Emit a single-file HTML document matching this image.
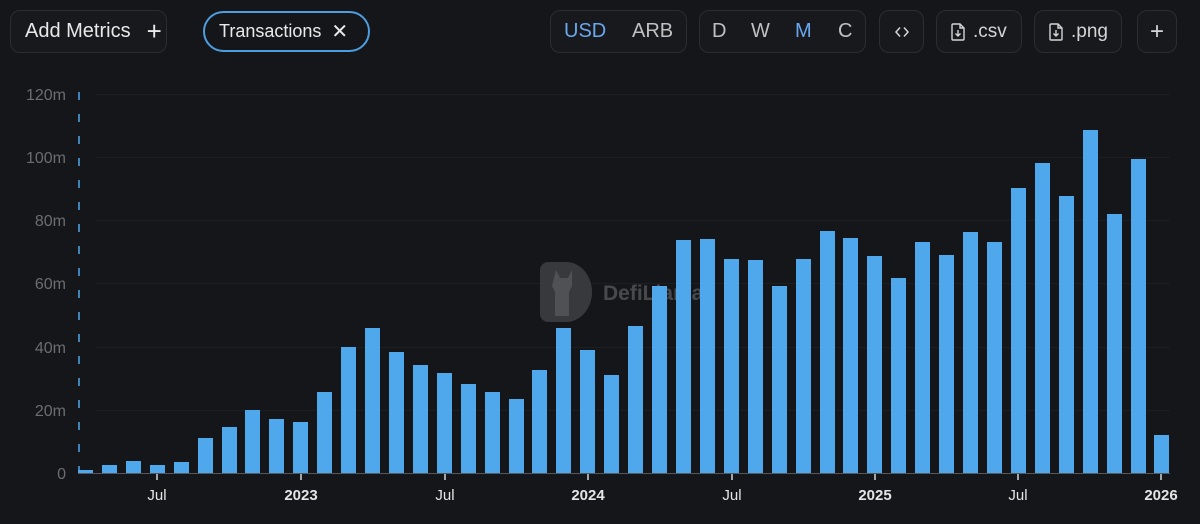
<!DOCTYPE html>
<html><head><meta charset="utf-8"><style>
html,body{margin:0;padding:0;background:#151619;width:1200px;height:524px;overflow:hidden;font-family:"Liberation Sans",sans-serif;}
.b{position:absolute;box-sizing:border-box;border:1px solid #2b2d31;border-radius:10px;background:#18191c;color:#d4d5d7;display:flex;align-items:center;}
</style></head><body>
<div class="b" style="left:10px;top:10px;width:157px;height:43px;padding-left:14px;font-size:20px;color:#e8e9ea;">Add Metrics<span style="margin-left:16px;font-size:26px;font-weight:300;">+</span></div>
<div class="b" style="left:203px;top:11px;width:167px;height:41px;border:2px solid #4d9ee0;border-radius:21px;background:#151619;padding-left:14px;font-size:18px;color:#e8e9ea;">Transactions<span style="margin-left:10px;font-size:20px;">✕</span></div>
<div class="b" style="left:550px;top:10px;width:137px;height:43px;font-size:20px;"><span style="position:absolute;left:13px;color:#6aa7ee;">USD</span><span style="position:absolute;left:81px;color:#bfc0c2;">ARB</span></div>
<div class="b" style="left:699px;top:10px;width:167px;height:43px;font-size:20px;color:#bfc0c2;"><span style="position:absolute;left:12px;">D</span><span style="position:absolute;left:51px;">W</span><span style="position:absolute;left:95px;color:#6aa7ee;">M</span><span style="position:absolute;left:138px;">C</span></div>
<div class="b" style="left:879px;top:10px;width:45px;height:43px;justify-content:center;"><svg width="14" height="12" viewBox="0 0 14 12"><path d="M5 1.5L1 6l4 4.5M9 1.5L13 6l-4 4.5" fill="none" stroke="#d4d5d7" stroke-width="1.5"/></svg></div>
<div class="b" style="left:936px;top:10px;width:86px;height:43px;padding-left:14px;font-size:19px;"><svg width="14" height="18" viewBox="0 0 14 18"><path d="M2 1h7l4 4v11a1 1 0 0 1-1 1H2a1 1 0 0 1-1-1V2a1 1 0 0 1 1-1zM9 1v4h4M7 7v6M4.5 10.5L7 13l2.5-2.5" fill="none" stroke="#d4d5d7" stroke-width="1.4"/></svg><span style="margin-left:8px;">.csv</span></div>
<div class="b" style="left:1034px;top:10px;width:88px;height:43px;padding-left:14px;font-size:19px;"><svg width="14" height="18" viewBox="0 0 14 18"><path d="M2 1h7l4 4v11a1 1 0 0 1-1 1H2a1 1 0 0 1-1-1V2a1 1 0 0 1 1-1zM9 1v4h4M7 7v6M4.5 10.5L7 13l2.5-2.5" fill="none" stroke="#d4d5d7" stroke-width="1.4"/></svg><span style="margin-left:8px;">.png</span></div>
<div class="b" style="left:1137px;top:10px;width:40px;height:43px;justify-content:center;font-size:24px;font-weight:300;">+</div>

<svg style="position:absolute;left:0;top:0" width="1200" height="524">
<g stroke="#1d1e22" stroke-width="1">
<line x1="95" y1="94.5" x2="1170" y2="94.5"/><line x1="95" y1="157.5" x2="1170" y2="157.5"/><line x1="95" y1="220.5" x2="1170" y2="220.5"/><line x1="95" y1="283.5" x2="1170" y2="283.5"/><line x1="95" y1="347.5" x2="1170" y2="347.5"/><line x1="95" y1="410.5" x2="1170" y2="410.5"/>
</g>
<g fill="#6b6d70" font-size="16" text-anchor="end" font-family="Liberation Sans,sans-serif">
<text x="66" y="100">120m</text><text x="66" y="163">100m</text><text x="66" y="226">80m</text><text x="66" y="289">60m</text><text x="66" y="353">40m</text><text x="66" y="416">20m</text><text x="66" y="479">0</text>
</g>
<g>
<path d="M548 262h18a26 30 0 0 1 0 60h-18a8 8 0 0 1-8-8v-44a8 8 0 0 1 8-8z" fill="#38393c"/>
<path d="M556 270l4 8h8l4-8v16l-3 6v24h-14v-24l-3-6z" fill="#505154"/>
<text x="603" y="300" fill="#48494c" font-size="21" font-weight="bold" font-family="Liberation Sans,sans-serif">DefiLlama</text>
</g>
<line x1="79" y1="92" x2="79" y2="473" stroke="#4fa8ec" stroke-width="1.5" stroke-dasharray="8,14"/>
<g fill="#4fa8ec">
<rect x="78" y="470" width="15" height="3"/><rect x="102" y="465" width="15" height="8"/><rect x="126" y="461" width="15" height="12"/><rect x="150" y="465" width="15" height="8"/><rect x="174" y="462" width="15" height="11"/><rect x="198" y="438" width="15" height="35"/><rect x="222" y="427" width="15" height="46"/><rect x="245" y="410" width="15" height="63"/><rect x="269" y="419" width="15" height="54"/><rect x="293" y="422" width="15" height="51"/><rect x="317" y="392" width="15" height="81"/><rect x="341" y="347" width="15" height="126"/><rect x="365" y="328" width="15" height="145"/><rect x="389" y="352" width="15" height="121"/><rect x="413" y="365" width="15" height="108"/><rect x="437" y="373" width="15" height="100"/><rect x="461" y="384" width="15" height="89"/><rect x="485" y="392" width="15" height="81"/><rect x="509" y="399" width="15" height="74"/><rect x="532" y="370" width="15" height="103"/><rect x="556" y="328" width="15" height="145"/><rect x="580" y="350" width="15" height="123"/><rect x="604" y="375" width="15" height="98"/><rect x="628" y="326" width="15" height="147"/><rect x="652" y="286" width="15" height="187"/><rect x="676" y="240" width="15" height="233"/><rect x="700" y="239" width="15" height="234"/><rect x="724" y="259" width="15" height="214"/><rect x="748" y="260" width="15" height="213"/><rect x="772" y="286" width="15" height="187"/><rect x="796" y="259" width="15" height="214"/><rect x="820" y="231" width="15" height="242"/><rect x="843" y="238" width="15" height="235"/><rect x="867" y="256" width="15" height="217"/><rect x="891" y="278" width="15" height="195"/><rect x="915" y="242" width="15" height="231"/><rect x="939" y="255" width="15" height="218"/><rect x="963" y="232" width="15" height="241"/><rect x="987" y="242" width="15" height="231"/><rect x="1011" y="188" width="15" height="285"/><rect x="1035" y="163" width="15" height="310"/><rect x="1059" y="196" width="15" height="277"/><rect x="1083" y="130" width="15" height="343"/><rect x="1107" y="214" width="15" height="259"/><rect x="1131" y="159" width="15" height="314"/><rect x="1154" y="435" width="15" height="38"/>
</g>
<line x1="78" y1="473.5" x2="1170" y2="473.5" stroke="#55575b" stroke-width="1"/>
<g stroke="#d4d5d7" stroke-width="1.5"><line x1="157" y1="474" x2="157" y2="480"/><line x1="301" y1="474" x2="301" y2="480"/><line x1="445" y1="474" x2="445" y2="480"/><line x1="588" y1="474" x2="588" y2="480"/><line x1="732" y1="474" x2="732" y2="480"/><line x1="875" y1="474" x2="875" y2="480"/><line x1="1018" y1="474" x2="1018" y2="480"/><line x1="1161" y1="474" x2="1161" y2="480"/></g>
<g fill="#e4e5e6" font-size="15" text-anchor="middle" font-family="Liberation Sans,sans-serif">
<text x="157" y="500">Jul</text><text x="301" y="500" font-weight="bold">2023</text><text x="445" y="500">Jul</text><text x="588" y="500" font-weight="bold">2024</text><text x="732" y="500">Jul</text><text x="875" y="500" font-weight="bold">2025</text><text x="1018" y="500">Jul</text><text x="1161" y="500" font-weight="bold">2026</text>
</g>
</svg>
</body></html>
